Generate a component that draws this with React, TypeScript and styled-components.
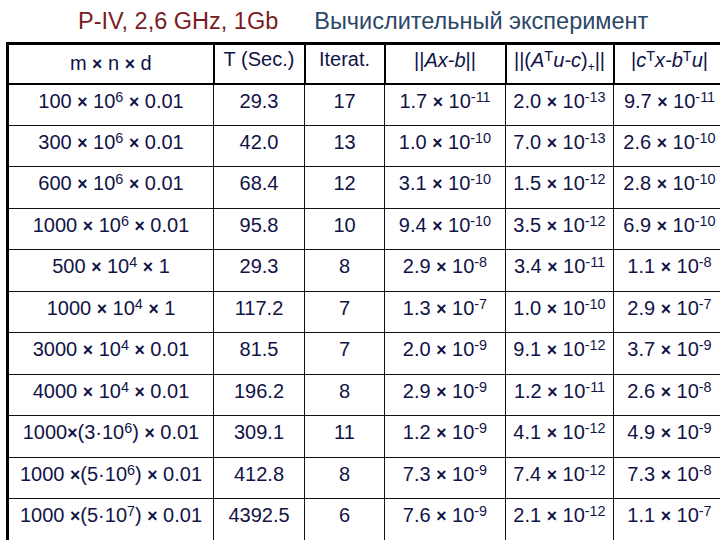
import React from 'react';
import styled, { createGlobalStyle } from 'styled-components';

const GlobalStyle = createGlobalStyle`
  html, body {
    margin: 0;
    padding: 0;
    background: #ffffff;
    overflow: hidden;
  }
  body {
    font-family: "Liberation Sans", Arial, sans-serif;
  }
`;

const Page = styled.div`
  width: 720px;
  height: 540px;
  overflow: hidden;
  background: #ffffff;
`;

const TitleBar = styled.div`
  display: flex;
  align-items: center;
  height: 42px;
  padding-left: 78px;
  gap: 36px;
  font-size: 23.5px;
  white-space: nowrap;
`;

const TitlePart = styled.span<{ $tone: 'red' | 'blue' }>`
  color: ${(p) => (p.$tone === 'red' ? '#7a1c1e' : '#2c4866')};
`;

const TableWrap = styled.div`
  padding-left: 6px;
`;

const Table = styled.table`
  border-collapse: collapse;
  table-layout: fixed;
  width: 718px;
  color: #111347;
  font-size: 20px;
  border-top: 3px solid #000;
  border-left: 3px solid #000;
`;

const HeadRow = styled.tr`
  height: 40px;
  border-bottom: 2px solid #000;
`;

const Row = styled.tr`
  height: 41.5px;
  border-bottom: 1.5px solid #111;
`;

const Head = styled.th<{ $shift?: number }>`
  font-weight: normal;
  text-align: center;
  vertical-align: middle;
  white-space: nowrap;
  padding: 0 0 ${(p) => (p.$shift ?? 6)}px 0;
  border-right: 2px solid #000;
`;

const Cell = styled.td`
  text-align: center;
  vertical-align: middle;
  white-space: nowrap;
  padding: 0 0 7px 0;
  border-right: 1.5px solid #111;
`;

const Sup = styled.sup`
  font-size: 0.72em;
  vertical-align: 0.42em;
  line-height: 0;
`;

const Sub = styled.sub`
  font-size: 0.6em;
  vertical-align: -0.3em;
  line-height: 0;
`;

const It = styled.i`
  font-style: italic;
`;

const Times = styled.span`
  font-size: 0.88em;
  font-weight: bold;
`;

type Sci = [string, string];

const rows: { size: React.ReactNode; t: string; it: string; r: Sci; d: Sci; g: Sci }[] = [
  { size: <>100 <Times>×</Times> 10<Sup>6</Sup> <Times>×</Times> 0.01</>, t: '29.3', it: '17', r: ['1.7', '-11'], d: ['2.0', '-13'], g: ['9.7', '-11'] },
  { size: <>300 <Times>×</Times> 10<Sup>6</Sup> <Times>×</Times> 0.01</>, t: '42.0', it: '13', r: ['1.0', '-10'], d: ['7.0', '-13'], g: ['2.6', '-10'] },
  { size: <>600 <Times>×</Times> 10<Sup>6</Sup> <Times>×</Times> 0.01</>, t: '68.4', it: '12', r: ['3.1', '-10'], d: ['1.5', '-12'], g: ['2.8', '-10'] },
  { size: <>1000 <Times>×</Times> 10<Sup>6</Sup> <Times>×</Times> 0.01</>, t: '95.8', it: '10', r: ['9.4', '-10'], d: ['3.5', '-12'], g: ['6.9', '-10'] },
  { size: <>500 <Times>×</Times> 10<Sup>4</Sup> <Times>×</Times> 1</>, t: '29.3', it: '8', r: ['2.9', '-8'], d: ['3.4', '-11'], g: ['1.1', '-8'] },
  { size: <>1000 <Times>×</Times> 10<Sup>4</Sup> <Times>×</Times> 1</>, t: '117.2', it: '7', r: ['1.3', '-7'], d: ['1.0', '-10'], g: ['2.9', '-7'] },
  { size: <>3000 <Times>×</Times> 10<Sup>4</Sup> <Times>×</Times> 0.01</>, t: '81.5', it: '7', r: ['2.0', '-9'], d: ['9.1', '-12'], g: ['3.7', '-9'] },
  { size: <>4000 <Times>×</Times> 10<Sup>4</Sup> <Times>×</Times> 0.01</>, t: '196.2', it: '8', r: ['2.9', '-9'], d: ['1.2', '-11'], g: ['2.6', '-8'] },
  { size: <>1000<Times>×</Times>(3·10<Sup>6</Sup>) <Times>×</Times> 0.01</>, t: '309.1', it: '11', r: ['1.2', '-9'], d: ['4.1', '-12'], g: ['4.9', '-9'] },
  { size: <>1000 <Times>×</Times>(5·10<Sup>6</Sup>) <Times>×</Times> 0.01</>, t: '412.8', it: '8', r: ['7.3', '-9'], d: ['7.4', '-12'], g: ['7.3', '-8'] },
  { size: <>1000 <Times>×</Times>(5·10<Sup>7</Sup>) <Times>×</Times> 0.01</>, t: '4392.5', it: '6', r: ['7.6', '-9'], d: ['2.1', '-12'], g: ['1.1', '-7'] },
];

const SciValue = ({ v }: { v: Sci }) => (
  <>
    {v[0]} <Times>×</Times> 10<Sup>{v[1]}</Sup>
  </>
);

const App = () => {
  return (
    <Page>
      <GlobalStyle />
      <TitleBar>
        <TitlePart $tone="red">P-IV, 2,6 GHz, 1Gb</TitlePart>
        <TitlePart $tone="blue">Вычислительный эксперимент</TitlePart>
      </TitleBar>
      <TableWrap>
        <Table>
          <colgroup>
            <col style={{ width: 206 }} />
            <col style={{ width: 91 }} />
            <col style={{ width: 80 }} />
            <col style={{ width: 121 }} />
            <col style={{ width: 108 }} />
            <col style={{ width: 112 }} />
          </colgroup>
          <thead>
            <HeadRow>
              <Head $shift={0}>m <Times>×</Times> n <Times>×</Times> d</Head>
              <Head $shift={9}>T (Sec.)</Head>
              <Head $shift={9}>Iterat.</Head>
              <Head $shift={6}>||<It>Ax-b</It>||</Head>
              <Head $shift={6}>||(<It>A</It><Sup>T</Sup><It>u-c</It>)<Sub>+</Sub>||</Head>
              <Head $shift={6}>|<It>c</It><Sup>T</Sup><It>x-b</It><Sup>T</Sup><It>u</It>|</Head>
            </HeadRow>
          </thead>
          <tbody>
            {rows.map((r, i) => (
              <Row key={i}>
                <Cell>{r.size}</Cell>
                <Cell>{r.t}</Cell>
                <Cell>{r.it}</Cell>
                <Cell><SciValue v={r.r} /></Cell>
                <Cell><SciValue v={r.d} /></Cell>
                <Cell><SciValue v={r.g} /></Cell>
              </Row>
            ))}
          </tbody>
        </Table>
      </TableWrap>
    </Page>
  );
};

export default App;
